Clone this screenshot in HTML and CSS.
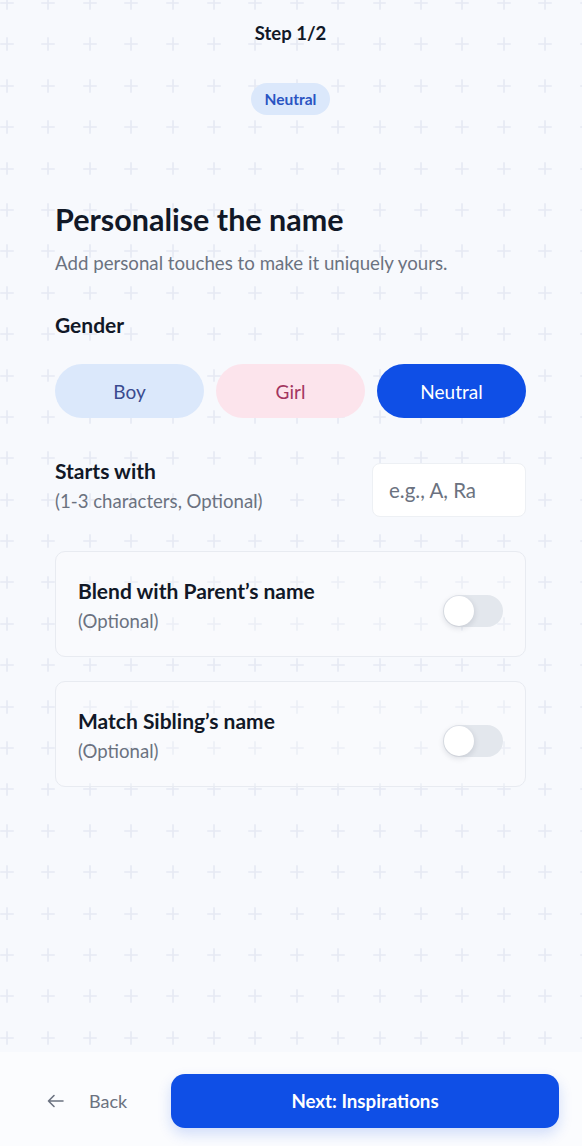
FILE: index.html
```html
<!DOCTYPE html>
<html lang="en">
<head>
    <meta charset="UTF-8">
    <meta name="viewport" content="width=device-width, initial-scale=1.0">
    <title>Personalise the name</title>
    <link rel="stylesheet" href="styles.css">
</head>
<body>
    <main class="page">
        <div class="step">Step 1/2</div>
        <div class="badge-row"><span class="badge">Neutral</span></div>

        <h1>Personalise the name</h1>
        <p class="subtitle">Add personal touches to make it uniquely yours.</p>

        <h2 class="label">Gender</h2>
        <div class="genders">
            <button class="gender boy">Boy</button>
            <button class="gender girl">Girl</button>
            <button class="gender neutral">Neutral</button>
        </div>

        <div class="starts">
            <div>
                <div class="label">Starts with</div>
                <div class="hint">(1-3 characters, Optional)</div>
            </div>
            <input class="starts-input" type="text" placeholder="e.g., A, Ra">
        </div>

        <div class="option">
            <div>
                <div class="label">Blend with Parent’s name</div>
                <div class="hint">(Optional)</div>
            </div>
            <span class="toggle"><span class="knob"></span></span>
        </div>

        <div class="option">
            <div>
                <div class="label">Match Sibling’s name</div>
                <div class="hint">(Optional)</div>
            </div>
            <span class="toggle"><span class="knob"></span></span>
        </div>
    </main>

    <footer class="actions">
        <button class="back">
            <svg width="17" height="14" viewBox="0 0 17 14" fill="none" stroke="#6b7280" stroke-width="1.6" stroke-linecap="round" stroke-linejoin="round">
                <path d="M16 7H1.5M7 1.5L1.5 7L7 12.5"/>
            </svg>
            <span>Back</span>
        </button>
        <button class="next">Next: Inspirations</button>
    </footer>
</body>
</html>
```

FILE: styles.css
```css
* {
    box-sizing: border-box;
}
body {
    margin: 0;
    height: 1146px;
    display: flex;
    flex-direction: column;
    font-family: Lato, "Noto Sans", sans-serif;
    color: #111827;
    background: #f7f9fd;
}
button, input {
    font-family: inherit;
}
.page {
    flex: 1;
    padding: 21px 56px 0 55px;
    background-color: #f7f9fd;
    background-image: url("data:image/svg+xml,%3Csvg xmlns='http://www.w3.org/2000/svg' width='41.4' height='41.4'%3E%3Cpath d='M20.7 14v13.4M14 20.7h13.4' stroke='%23e6e9f3' stroke-width='1.6'/%3E%3C/svg%3E");
    background-size: 41.4px 41.4px;
    background-position: -13.7px -17.7px;
}
.step {
    text-align: center;
    font-size: 18.5px;
    font-weight: 700;
    line-height: 24px;
}
.badge-row {
    text-align: center;
    margin-top: 38px;
}
.badge {
    display: inline-block;
    height: 32px;
    line-height: 32px;
    padding: 0 14px;
    border-radius: 16px;
    background: #dbe8fb;
    color: #2a54c2;
    font-size: 15.5px;
    font-weight: 700;
}
h1 {
    margin: 87px 0 0;
    font-size: 30.5px;
    line-height: 34px;
    font-weight: 700;
}
.subtitle {
    margin: 16px 0 0;
    font-size: 18.7px;
    line-height: 22px;
    color: #6b7280;
}
.label {
    margin: 0;
    font-size: 21px;
    line-height: 24px;
    font-weight: 700;
}
h2.label {
    margin-top: 39px;
}
.hint {
    margin-top: 7px;
    font-size: 18.6px;
    line-height: 22px;
    color: #6b7280;
}
.genders {
    margin-top: 27px;
    display: grid;
    grid-template-columns: repeat(3, 1fr);
    gap: 12px;
}
.gender {
    height: 54px;
    border: none;
    border-radius: 27px;
    font-size: 19px;
}
.boy {
    background: #dbe8fb;
    color: #3a4b8f;
}
.girl {
    background: #fce4ec;
    color: #a3365f;
}
.neutral {
    background: #0f4fe6;
    color: #fff;
}
.starts {
    margin-top: 41px;
    display: flex;
    justify-content: space-between;
    align-items: flex-start;
}
.starts-input {
    margin-top: 4px;
    width: 154px;
    height: 54px;
    padding: 0 16px;
    border: 1px solid #edf0f4;
    border-radius: 8px;
    background: #fff;
    font-size: 20.5px;
    color: #111827;
}
.starts-input::placeholder {
    color: #6b7280;
}
.option {
    margin-top: 34px;
    display: flex;
    justify-content: space-between;
    align-items: center;
    padding: 27px 22px 24px 22px;
    border: 1px solid #e8ebf1;
    border-radius: 10px;
    background: rgba(255, 255, 255, 0.25);
}
.option + .option {
    margin-top: 24px;
}
.toggle {
    margin-top: 10px;
    width: 60px;
    height: 32px;
    border-radius: 16px;
    background: #e3e7ed;
    padding: 1px;
}
.knob {
    display: block;
    width: 30px;
    height: 30px;
    border-radius: 50%;
    background: #fff;
    box-shadow: 0 2px 6px rgba(15, 23, 42, 0.14);
}
.actions {
    height: 94px;
    display: flex;
    align-items: flex-start;
    padding: 22px 23px 0 47px;
    background: #fbfcfe;
}
.back {
    display: flex;
    align-items: center;
    gap: 25px;
    height: 54px;
    padding: 0;
    border: none;
    background: none;
    color: #6b7280;
    font-size: 18px;
}
.next {
    margin-left: auto;
    width: 388px;
    height: 54px;
    border: none;
    border-radius: 14px;
    background: #0f4fe6;
    color: #fff;
    font-size: 18.7px;
    font-weight: 700;
    box-shadow: 0 6px 14px rgba(15, 79, 230, 0.18);
}
```
